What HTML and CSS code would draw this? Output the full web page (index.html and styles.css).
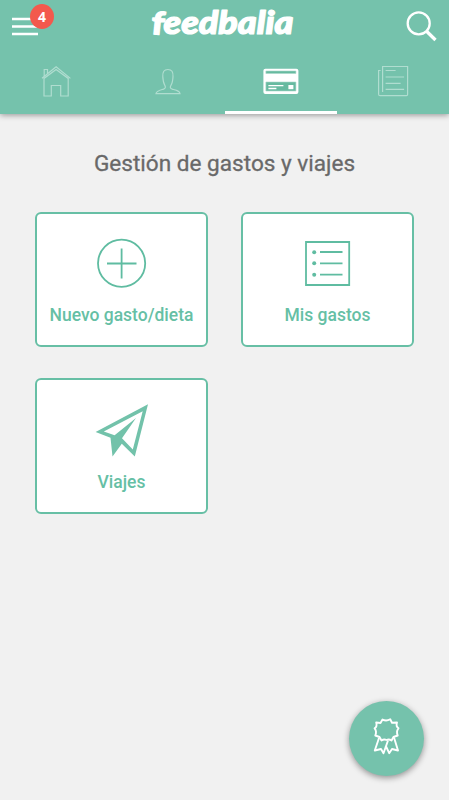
FILE: index.html
```html
<!DOCTYPE html>
<html lang="es">
<head>
<meta charset="utf-8">
<title>feedbalia</title>
<link rel="stylesheet" href="styles.css">
</head>
<body>
<header class="header">
  <div class="topbar">
    <button class="menu" aria-label="Menú">
      <svg width="28" height="20" viewBox="0 0 28 20"><path d="M0 2h26M0 9.500h26M0 17h26" stroke="#fff" stroke-width="2.300"/></svg>
      <span class="badge">4</span>
    </button>
    <svg class="logo" width="150" height="44" viewBox="0 0 150 44"><text class="logo-text" x="1.500" y="34" textLength="143" lengthAdjust="spacingAndGlyphs"><tspan class="logo-f" rotate="5">f</tspan>eedbalia</text></svg>
    <button class="search" aria-label="Buscar">
      <svg width="34" height="34" viewBox="404 9 34 34"><circle cx="418.700" cy="23.400" r="11" fill="none" stroke="#fff" stroke-width="2.300"/><path d="M426.300 31l9.200 9" stroke="#fff" stroke-width="3.300"/></svg>
    </button>
  </div>
  <nav class="tabs">
    <a class="tab"><svg width="34" height="34" viewBox="39 64 34 34"><path d="M42 78.200l14.100-11.400L70.400 78.400M44 78.400V96h7.300V85.500h9.400V96h7.500V78.400L56.100 69.600zM44.200 76V69.500h3.300V73.400"/></svg></a>
    <a class="tab"><svg width="34" height="34" viewBox="151.400 64 34 34"><path d="M156.400 93.600h24c-.4-2.700-3-3.200-7.200-4.300-3-.7-3-2.300-1.500-4.700 1.300-2 1.500-4.300 1.700-7.800.3-5-1.200-7.300-5.100-7.300s-5.400 2.300-5.100 7.300c.2 3.500.5 5.800 1.700 7.800 1.500 2.400 1.200 4-1.500 4.700-4 1.100-6.600 1.600-7 4.300z"/></svg></a>
    <a class="tab active"><svg width="36" height="28" viewBox="262.600 67 36 28"><rect x="263" y="68.800" width="35" height="25.300" rx="2" fill="#fff" stroke="none"/><path d="M265.500 71h30v2.500h-30zM265.500 82h30v9h-30z" fill="#67baa0" stroke="#a9d9ca" stroke-width=".6"/><path d="M268 85.600h15M268 88.500h8" stroke="#fff" stroke-width="1.400"/><rect x="288" y="85" width="5" height="4.200" fill="#fff" stroke="none"/></svg></a>
    <a class="tab"><svg width="34" height="34" viewBox="375.900 64 34 34"><path d="M382.500 92V66.500h25V94.500q0 1.200-1.200 1.200H380q-1.500 0-1.500-1.500V70.500h2M385.500 70.500h10M385.500 77h18.500M385.500 83.300h15M385.500 89.300h18.500"/></svg></a>
  </nav>
</header>
<main class="content">
  <h1 class="title">Gestión de gastos y viajes</h1>
  <div class="cards">
    <a class="card">
      <svg class="icon" width="56" height="56" viewBox="94 235 56 56"><g fill="none" stroke="#5fbca1" stroke-width="1.800"><circle cx="121.600" cy="263.300" r="23.600"/><path d="M107 263.500h29.500M121.600 248.500v30"/></g></svg>
      <span class="label">Nuevo gasto/dieta</span>
    </a>
    <a class="card">
      <svg class="icon" width="56" height="56" viewBox="300 235 56 56"><g fill="none" stroke="#5fbca1" stroke-width="1.800"><path d="M306 242h43.200v43H306zM320 252h22.500M320 263.300h22.500M320 274.600h22.500"/></g><g fill="#5fbca1"><circle cx="314.200" cy="252.200" r="2"/><circle cx="314.200" cy="263.300" r="2"/><circle cx="314.200" cy="274.700" r="2"/></g></svg>
      <span class="label">Mis gastos</span>
    </a>
    <a class="card card-trips">
      <svg class="icon" width="56" height="56" viewBox="94 402 56 56"><path fill="#72c2aa" fill-rule="evenodd" d="M148 404.300L134.800 456.600 121.800 443.800 112.500 456.600 110.500 437.800 95.600 432zM142.700 411.200L103.800 431.400 114.600 435.300 136 418 122 438.200 132.800 449.500z"/></svg>
      <span class="label">Viajes</span>
    </a>
  </div>
</main>
<button class="fab" aria-label="Logros">
  <svg width="30" height="40" viewBox="372 716 30 40"><g fill="none" stroke="#fff" stroke-width="1.900" stroke-linejoin="round"><path d="M382.500 719.600Q386.300 721.600 390.200 719.300L392 722.700 397 722.500Q395.600 726.300 398.500 728.300 396 731 397.700 735.500L393.500 737 391.500 740.500Q389 738.800 386.500 740 384 738.800 381.500 740.500L379.500 737 375.300 735.500Q377 731.200 374.600 728.300 377.500 726.500 376.200 722.500L380.500 723z"/><path d="M379 738L374.800 750.500 381 749 383.500 753.200 388 740.500M385.600 745.500L389.200 753.200 392 749 398 750.500 394 737.500"/></g></svg>
</button>
</body>
</html>
```
FILE: styles.css
```css
* { box-sizing: border-box; }
body {
  margin: 0;
  height: 800px;
  overflow: hidden;
  background: #f1f1f1;
  font-family: Roboto, sans-serif;
}
button { border: 0; padding: 0; background: none; font: inherit; }
svg { display: block; flex: none; }
.header {
  height: 114px;
  background: #75c2ac;
  box-shadow: 0 1px 6px rgba(0, 0, 0, .4);
}
.topbar {
  height: 50px;
  display: flex;
  justify-content: space-between;
  padding: 0 11px 0 12px;
}
.menu { position: relative; width: 42px; height: 50px; padding-top: 4px; }
.badge {
  position: absolute;
  left: 18px;
  top: 4px;
  width: 24px;
  height: 25px;
  border-radius: 50%;
  background: #f3594d;
  color: #fff;
  font: bold 14px/25px "Open Sans", sans-serif;
  text-align: center;
}
.logo { margin-left: -11px; }
.logo-text {
  font: italic 900 31.5px Lato, sans-serif;
  fill: #fff;
  stroke: #fff;
  stroke-width: 1.2;
  stroke-linejoin: round;
}
.logo-f { font-style: normal; }
.search { height: 34px; margin-top: 9px; }
.tabs { display: grid; grid-template-columns: repeat(4, 1fr); height: 64px; }
.tab {
  display: flex;
  justify-content: center;
  align-items: center;
  padding-bottom: 2px;
  fill: none;
  stroke: #b0ddd0;
  stroke-width: 1.2;
}
.active { border-bottom: 3px solid #fff; padding-bottom: 0; }
.content { padding: 36px 35px 0; }
.title {
  margin: 0;
  color: #696969;
  font-size: 22.6px;
  font-weight: 400;
  -webkit-text-stroke: .3px #696969;
  line-height: 28px;
  text-align: center;
}
.cards {
  display: grid;
  grid-template-columns: 173px 173px;
  grid-template-rows: 135px 136px;
  gap: 31px 33px;
  margin-top: 34px;
}
.card {
  display: flex;
  flex-direction: column;
  align-items: center;
  padding-top: 21px;
  border: 2px solid #67bfa5;
  border-radius: 6px;
  background: #fff;
}
.card-trips { padding-top: 22px; }
.label {
  margin-top: 13px;
  color: #66bfa5;
  font-size: 17.5px;
  font-weight: 500;
  line-height: 22px;
  white-space: nowrap;
}
.fab {
  position: absolute;
  left: 349px;
  top: 701px;
  width: 75px;
  height: 75px;
  display: flex;
  align-items: center;
  justify-content: center;
  padding-bottom: 5px;
  border-radius: 50%;
  background: #75c2ac;
  box-shadow: 0 2px 6px rgba(0, 0, 0, .4);
}
```
